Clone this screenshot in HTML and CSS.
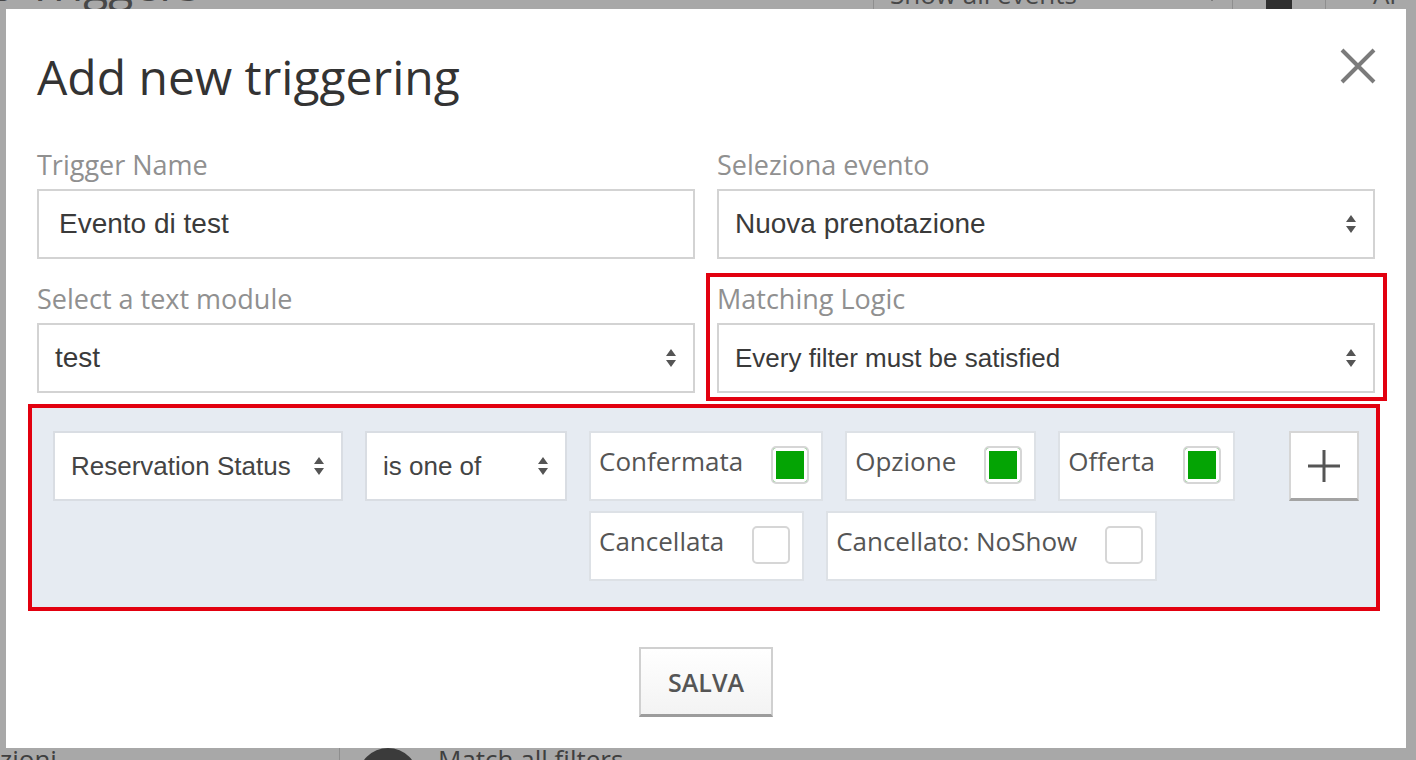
FILE: index.html
```html
<!DOCTYPE html>
<html lang="it">
<head>
  <meta charset="UTF-8" />
  <meta name="viewport" content="width=device-width, initial-scale=1.0" />
  <title>Triggers</title>
  <link rel="stylesheet" href="styles.css">
</head>
<body>

  <!-- page behind the dialog (dimmed) -->
  <div class="page">
    <div class="page-head">
      <h2 class="page-title">o Triggers</h2>
      <div class="toolbar">
        <div class="tool-select">
          <span>Show all events</span>
          <span class="caret"></span>
        </div>
        <div class="tool-btn"><span class="tool-icon"></span></div>
        <div class="tool-btn wide">Al</div>
      </div>
    </div>
    <div class="page-foot">
      <div class="foot-cell first">zioni</div>
      <div class="foot-cell">
        <span class="dot"></span>
        <span>Match all filters</span>
      </div>
    </div>
  </div>

  <div class="modal">
    <div class="modal-head">
      <h1 class="modal-title">Add new triggering</h1>
      <button class="close" title="Close">
        <svg width="36" height="36" viewBox="0 0 36 36">
          <path d="M2 2L34 34M34 2L2 34" stroke="#7b7b7b" stroke-width="4" fill="none"/>
        </svg>
      </button>
    </div>

    <div class="form-grid">
      <div class="field">
        <label for="name">Trigger Name</label>
        <input id="name" class="control text-input" type="text" value="Evento di test" />
      </div>
      <div class="field">
        <label>Seleziona evento</label>
        <div class="control">
          <span>Nuova prenotazione</span>
          <svg class="arrows" width="10" height="18" viewBox="0 0 10 18"><path d="M5 0L10 7H0Z M0 11H10L5 18Z" fill="#555"/></svg>
        </div>
      </div>
      <div class="field">
        <label>Select a text module</label>
        <div class="control">
          <span>test</span>
          <svg class="arrows" width="10" height="18" viewBox="0 0 10 18"><path d="M5 0L10 7H0Z M0 11H10L5 18Z" fill="#555"/></svg>
        </div>
      </div>
      <div class="field highlight">
        <label>Matching Logic</label>
        <div class="control small">
          <span>Every filter must be satisfied</span>
          <svg class="arrows" width="10" height="18" viewBox="0 0 10 18"><path d="M5 0L10 7H0Z M0 11H10L5 18Z" fill="#555"/></svg>
        </div>
      </div>
    </div>

    <div class="filter-panel">
      <div class="control small field-select">
        <span>Reservation Status</span>
        <svg class="arrows" width="10" height="18" viewBox="0 0 10 18"><path d="M5 0L10 7H0Z M0 11H10L5 18Z" fill="#555"/></svg>
      </div>
      <div class="control small op-select">
        <span>is one of</span>
        <svg class="arrows" width="10" height="18" viewBox="0 0 10 18"><path d="M5 0L10 7H0Z M0 11H10L5 18Z" fill="#555"/></svg>
      </div>
      <div class="chips">
        <div class="chip">Confermata <span class="check on"></span></div>
        <div class="chip">Opzione <span class="check on"></span></div>
        <div class="chip">Offerta <span class="check on"></span></div>
        <div class="chip">Cancellata <span class="check"></span></div>
        <div class="chip">Cancellato: NoShow <span class="check"></span></div>
      </div>
      <button class="add-btn" title="Add filter">
        <svg width="34" height="34" viewBox="0 0 34 34">
          <path d="M17 1V33M1 17H33" stroke="#555" stroke-width="3" fill="none"/>
        </svg>
      </button>
    </div>

    <div class="actions">
      <button class="save">SALVA</button>
    </div>
  </div>

</body>
</html>
```

FILE: styles.css
```css
* {
  box-sizing: border-box;
}

html, body {
  margin: 0;
  height: 100%;
}

body {
  background: #a8a8a8;
  font-family: 'Open Sans', sans-serif;
  overflow: hidden;
}

/* dimmed page behind */
.page {
  height: 100vh;
  display: flex;
  flex-direction: column;
  justify-content: space-between;
  color: #474747;
}

.page-head {
  display: flex;
  align-items: stretch;
  height: 50px;
  margin-top: -41px;
}

.page-title {
  flex: 1;
  margin: -1px 0 0 -12px;
  font-size: 46px;
  font-weight: 400;
  line-height: 50px;
}

.toolbar {
  display: flex;
}

.tool-select {
  width: 360px;
  display: flex;
  align-items: flex-end;
  justify-content: space-between;
  padding: 0 14px 2px 16px;
  border-left: 1px solid #8e8e8e;
  border-right: 1px solid #8e8e8e;
  font-size: 26px;
  line-height: 26px;
}

.caret {
  border-left: 6px solid transparent;
  border-right: 6px solid transparent;
  border-top: 7px solid #444;
  margin-bottom: 6px;
}

.tool-btn {
  display: flex;
  align-items: flex-end;
  justify-content: center;
  width: 93px;
  padding-bottom: 2px;
  border-right: 1px solid #8e8e8e;
  font-size: 26px;
  line-height: 26px;
}

.tool-btn.wide {
  width: 90px;
  justify-content: flex-start;
  padding-left: 47px;
  border-right: 0;
}

.tool-icon {
  width: 26px;
  height: 30px;
  margin-bottom: -2px;
  background: #2f2f2f;
}

.page-foot {
  display: flex;
  height: 40px;
  margin-bottom: -28px;
  font-size: 26px;
  line-height: 22px;
  color: #3f3f3f;
}

.foot-cell {
  display: flex;
  align-items: flex-start;
  gap: 20px;
  padding-left: 18px;
}

.foot-cell.first {
  width: 340px;
  padding-left: 0;
  border-right: 1px solid #8e8e8e;
}

.dot {
  width: 60px;
  height: 60px;
  border-radius: 50%;
  background: #3b3b3b;
}

/* dialog */
.modal {
  position: fixed;
  top: 9px;
  left: 6px;
  width: 1400px;
  height: 739px;
  background: #fff;
  padding: 40px 31px 31px;
}

.modal-head {
  display: flex;
  justify-content: space-between;
  align-items: flex-start;
  margin-bottom: 40px;
}

.modal-title {
  margin: 0;
  font-size: 48px;
  font-weight: 400;
  line-height: 56px;
  color: #333;
}

.close {
  width: 36px;
  height: 36px;
  margin: -1px -1px 0 0;
  padding: 0;
  border: 0;
  background: none;
}

.form-grid {
  display: grid;
  grid-template-columns: 1fr 1fr;
  column-gap: 22px;
  row-gap: 20px;
}

.field label {
  display: block;
  font-size: 27px;
  line-height: 40px;
  margin-bottom: 4px;
  color: #909090;
}

.field.highlight {
  position: relative;
}

.field.highlight::after {
  content: "";
  position: absolute;
  top: -6px;
  right: -12px;
  bottom: -8px;
  left: -11px;
  border: 4px solid #e2000f;
}

.control {
  width: 100%;
  height: 70px;
  display: flex;
  align-items: center;
  justify-content: space-between;
  padding: 0 17px 0 16px;
  border: 2px solid #d3d3d3;
  background: #fff;
  font-family: 'Liberation Sans', Arial, sans-serif;
  font-size: 28px;
  color: #3a3a3a;
}

.control.small {
  font-size: 26px;
}

.text-input {
  padding-left: 20px;
  outline: none;
}

.arrows {
  flex-shrink: 0;
}

/* filter row */
.filter-panel {
  display: flex;
  align-items: flex-start;
  gap: 22px;
  margin: 11px -5px 0 -9px;
  padding: 23px 17px 26px 21px;
  border: 4px solid #e2000f;
  background: #e6ebf2;
}

.filter-panel .control {
  border-color: #d9dde3;
  color: #444;
}

.field-select {
  width: 290px;
  flex-shrink: 0;
}

.op-select {
  width: 202px;
  flex-shrink: 0;
}

.chips {
  flex: 1;
  display: flex;
  flex-wrap: wrap;
  gap: 10px 22px;
}

.chip {
  height: 70px;
  display: flex;
  align-items: center;
  gap: 28px;
  padding: 0 12px 10px 8px;
  border: 2px solid #dde1e6;
  background: #fff;
  font-size: 26px;
  color: #555;
}

.check {
  width: 38px;
  height: 38px;
  margin-top: 8px;
  border: 2px solid #d6d6d6;
  border-radius: 5px;
  background: #fff;
}

.check.on {
  background: #04a404;
  box-shadow: inset 0 0 0 3px #fff;
}

.add-btn {
  width: 70px;
  height: 70px;
  flex-shrink: 0;
  display: flex;
  align-items: center;
  justify-content: center;
  padding: 0;
  border: 2px solid #d6d6d6;
  border-bottom: 3px solid #a3a3a3;
  background: #fff;
}

.actions {
  display: flex;
  justify-content: center;
  margin-top: 36px;
}

.save {
  width: 134px;
  height: 70px;
  border: 2px solid #d0d0d0;
  border-bottom: 3px solid #9c9c9c;
  background: linear-gradient(#fff, #f3f3f3);
  font-family: 'Open Sans', sans-serif;
  font-weight: 600;
  font-size: 25px;
  color: #555;
}
```
